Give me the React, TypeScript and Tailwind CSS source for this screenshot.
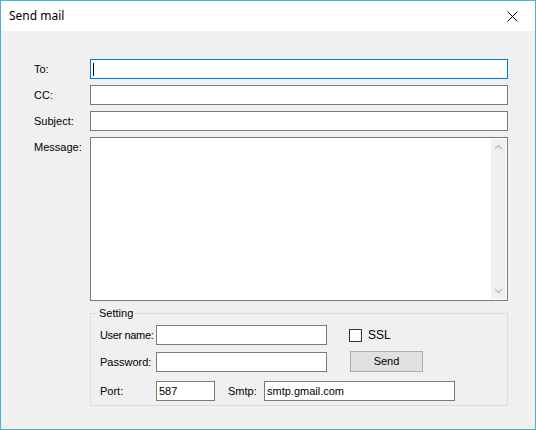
import React from 'react';

const inputCls =
  'h-[20px] shrink-0 border border-[#7a7a7a] bg-white px-[2px] text-[11px] leading-[18px] text-black whitespace-nowrap';

function Row({ label, children }: { label: string; children: React.ReactNode }) {
  return (
    <div className="flex items-start">
      <span className="w-[56px] shrink-0 whitespace-nowrap pt-[3px] leading-[14px]">{label}</span>
      {children}
    </div>
  );
}

export default function App() {
  return (
    <div
      className="flex h-[430px] w-[536px] flex-col border border-[#4cb4c8] text-[11px] text-black"
      style={{ fontFamily: '"Liberation Sans", Arial, sans-serif' }}
    >
      <div className="flex h-[30px] shrink-0 items-center justify-between bg-white pl-[8px] pr-[17px]">
        <span className="text-[12px]" style={{ fontFamily: '"Noto Sans", "Liberation Sans", sans-serif' }}>
          Send mail
        </span>
        <svg width="11" height="11" viewBox="0 0 11 11" aria-hidden>
          <path d="M0.5 0.5 L10.5 10.5 M10.5 0.5 L0.5 10.5" stroke="#000" strokeWidth="1" />
        </svg>
      </div>

      <div className="flex flex-1 flex-col gap-[6px] bg-[#f0f0f0] pl-[33px] pr-[27px] pt-[28px]">
        <Row label="To:">
          <div className="relative h-[20px] flex-1 border border-[#0078d7] bg-white">
            <span className="absolute left-[2px] top-[3px] h-[13px] w-[1px] bg-black" />
          </div>
        </Row>
        <Row label="CC:">
          <div className="h-[20px] flex-1 border border-[#7a7a7a] bg-white" />
        </Row>
        <Row label="Subject:">
          <div className="h-[20px] flex-1 border border-[#7a7a7a] bg-white" />
        </Row>
        <Row label="Message:">
          <div className="flex h-[164px] flex-1 justify-end border border-[#7a7a7a] bg-white p-[1px]">
            <div className="flex w-[15px] flex-col items-center justify-between bg-[#f0f0f0] py-[5px]">
              <svg width="9" height="6" viewBox="0 0 9 6" aria-hidden>
                <path d="M1 5 L4.5 1.5 L8 5" stroke="#c0c0c0" strokeWidth="1.5" fill="none" />
              </svg>
              <svg width="9" height="6" viewBox="0 0 9 6" aria-hidden>
                <path d="M1 1 L4.5 4.5 L8 1" stroke="#c0c0c0" strokeWidth="1.5" fill="none" />
              </svg>
            </div>
          </div>
        </Row>

        <div className="relative ml-[56px] mt-[6px] flex h-[93px] flex-col border border-[#dcdcdc] pl-[9px] pt-[11px]">
          <span className="absolute left-[7px] top-[-8px] bg-[#f0f0f0] px-[1px] leading-[14px]">Setting</span>
          <div className="flex items-center">
            <span className="w-[56px] shrink-0 whitespace-nowrap leading-[14px] tracking-[-0.35px]">User name:</span>
            <div className={`${inputCls} w-[171px]`} />
            <span className="ml-[22px] h-[13px] w-[13px] shrink-0 border border-[#333333] bg-white" />
            <span className="ml-[6px] text-[12px]">SSL</span>
          </div>
          <div className="mt-[6px] flex items-center">
            <span className="w-[56px] shrink-0 whitespace-nowrap leading-[14px]">Password:</span>
            <div className={`${inputCls} w-[171px]`} />
            <button
              type="button"
              className="ml-[23px] h-[21px] w-[73px] shrink-0 border border-[#adadad] bg-[#e1e1e1] text-[11px] leading-[19px]"
            >
              Send
            </button>
          </div>
          <div className="mt-[9px] flex items-center">
            <span className="w-[56px] shrink-0 whitespace-nowrap leading-[14px]">Port:</span>
            <div className={`${inputCls} w-[59px]`}>587</div>
            <span className="ml-[13px] w-[36px] shrink-0 whitespace-nowrap leading-[14px]">Smtp:</span>
            <div className={`${inputCls} w-[191px]`}>smtp.gmail.com</div>
          </div>
        </div>
      </div>
    </div>
  );
}
